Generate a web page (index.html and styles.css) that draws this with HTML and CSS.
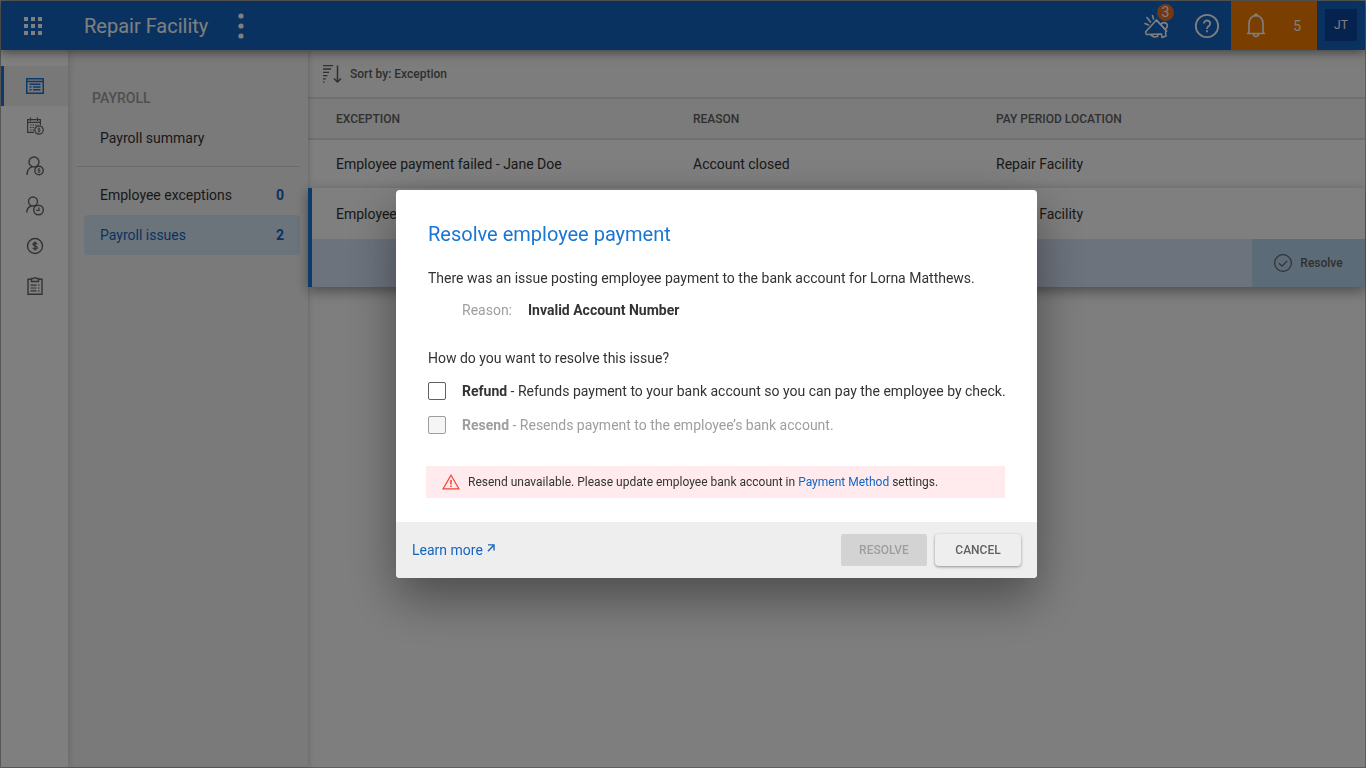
FILE: index.html
```html
<!DOCTYPE html>
<html lang="en">
<head>
    <meta charset="UTF-8">
    <meta name="viewport" content="width=device-width, initial-scale=1.0">
    <title>Repair Facility - Payroll issues</title>
    <link rel="stylesheet" href="styles.css">
</head>
<body>
    <div class="app">
        <header class="topbar">
            <button class="apps-btn" aria-label="Apps">
                <svg width="18" height="18" viewBox="0 0 18 18" fill="currentColor">
                    <path d="M0 0h4v4H0zM7 0h4v4H7zM14 0h4v4h-4zM0 7h4v4H0zM7 7h4v4H7zM14 7h4v4h-4zM0 14h4v4H0zM7 14h4v4H7zM14 14h4v4h-4z"/>
                </svg>
            </button>
            <h1>Repair Facility</h1>
            <button class="more-btn" aria-label="More">
                <svg width="6" height="26" viewBox="0 0 6 26" fill="currentColor">
                    <circle cx="3" cy="3" r="2.6"/><circle cx="3" cy="13" r="2.6"/><circle cx="3" cy="23" r="2.6"/>
                </svg>
            </button>
            <div class="topbar-right">
                <button class="top-btn news-btn" aria-label="News">
                    <svg width="26" height="28" viewBox="0 0 26 28" fill="none" stroke="currentColor" stroke-width="1.6" stroke-linejoin="round" stroke-linecap="round">
                        <path d="M12.5 8 1.5 20l1 2.5L17.500 22l.5 3.500 4-1.500-.5-4 1-1z"/>
                        <path d="M12.500 8 22.500 19M7 23l3 2 3.500-.5.5-2M17 13a3.200 3.200 0 1 1 3.500 4M1 11.500l3.500 1.500M3 5.500 6.500 10M8.500 3.500 9.500 7"/>
                    </svg>
                    <span class="news-count">3</span>
                </button>
                <button class="top-btn" aria-label="Help">
                    <svg width="26" height="26" viewBox="0 0 26 26" fill="none" stroke="currentColor" stroke-width="1.8">
                        <circle cx="13" cy="13" r="11.200"/>
                        <path d="M9.800 10.500a3.200 3 0 1 1 5 2.500c-1.300.9-1.800 1.400-1.800 3"/>
                        <path d="M13 17.300v2"/>
                    </svg>
                </button>
                <button class="alerts-btn" aria-label="Notifications">
                    <svg width="20" height="26" viewBox="0 0 20 26" fill="none" stroke="currentColor" stroke-width="1.600">
                        <path d="M1 20.500h18M3 20.500V10a7 7.500 0 0 1 14 0v10.500M7.500 20.500a2.500 3 0 0 0 5 0"/>
                        <circle cx="10" cy="2" r=".9" fill="currentColor"/>
                    </svg>
                    <span>5</span>
                </button>
                <button class="user-btn">JT</button>
            </div>
        </header>

        <div class="layout">
            <nav class="rail" aria-label="Main">
                <a href="#" class="rail-item active" aria-label="Payroll">
                    <svg width="18" height="18" viewBox="0 0 18 18" fill="none" stroke="currentColor" stroke-width="1.500">
                        <path d="M.75 1.750h16.500v14.500H.75zM1 4.500h16M3.500 7.300h11M3.500 10h2M7 10h7.500M3.500 12.800h2M7 12.800h7.500"/>
                    </svg>
                </a>
                <a href="#" class="rail-item" aria-label="Pay periods">
                    <svg width="18" height="18" viewBox="0 0 18 18" fill="none" stroke="currentColor" stroke-width="1.200">
                        <path d="M8 15.400H1.600V2.600h12.800V8M1.600 5.400h12.800M4.500.5V4M11.500.5V4"/>
                        <path d="M4 8h8M4 10.500h4.500M4 13h4" stroke-dasharray="1.500 1"/>
                        <circle cx="13" cy="13" r="4.200"/>
                        <path d="M14.300 11.700c-.6-.6-2.500-.5-2.500.4 0 1.200 2.500.6 2.500 1.800 0 1-1.900 1-2.600.3M13 10.600v4.800" stroke-width=".8"/>
                    </svg>
                </a>
                <a href="#" class="rail-item" aria-label="Employee pay">
                    <svg width="18" height="20" viewBox="0 0 18 20" fill="none" stroke="currentColor" stroke-width="1.400">
                        <circle cx="8" cy="6" r="5"/>
                        <path d="M1 19c0-4.500 2-7.200 5-8.200"/>
                        <circle cx="13" cy="14.500" r="4.200"/>
                        <path d="M14.300 13.200c-.6-.6-2.500-.5-2.500.4 0 1.200 2.500.6 2.500 1.800 0 1-1.900 1-2.600.3M13 12.100v4.800" stroke-width=".8"/>
                    </svg>
                </a>
                <a href="#" class="rail-item" aria-label="Employee time">
                    <svg width="18" height="20" viewBox="0 0 18 20" fill="none" stroke="currentColor" stroke-width="1.400">
                        <circle cx="7" cy="5.500" r="4.500"/>
                        <path d="M.8 16.500c0-3.500 1.800-5.700 4.500-6.500"/>
                        <circle cx="12.500" cy="14" r="4.800"/>
                        <path d="M13 11.300v3h-2.800" stroke-width="1.200"/>
                    </svg>
                </a>
                <a href="#" class="rail-item" aria-label="Payments">
                    <svg width="18" height="18" viewBox="0 0 18 18" fill="none" stroke="currentColor" stroke-width="1.400">
                        <circle cx="9" cy="9" r="7.500"/>
                        <path d="M11.200 7.200C10.500 5.500 7 5.700 7 7.300c0 2.100 4.200 1.200 4.200 3.400 0 1.700-3.600 1.900-4.400 0M9 4.500v9"/>
                    </svg>
                </a>
                <a href="#" class="rail-item" aria-label="Reports">
                    <svg width="18" height="18" viewBox="0 0 18 18" fill="none" stroke="currentColor" stroke-width="1.400">
                        <path d="M5 2.300H2v14.900h14V2.300h-3M5.500 4.500v-3H7.500L9 .5l1.500 1h2v3z"/>
                        <path d="M4.500 8.200h6M12 8.200h1.500M4.500 11h6M12 11h1.500M4.500 13.800h6M12 13.800h1.500" stroke-width="1.200"/>
                    </svg>
                </a>
            </nav>

            <aside class="panel">
                <h2>PAYROLL</h2>
                <a href="#" class="panel-item">Payroll summary</a>
                <hr>
                <a href="#" class="panel-item">Employee exceptions <b>0</b></a>
                <a href="#" class="panel-item active">Payroll issues <b>2</b></a>
            </aside>

            <main class="content">
                <div class="sortbar">
                    <button class="sort-btn">
                        <svg width="20" height="18" viewBox="0 0 20 18" fill="none" stroke="currentColor" stroke-width="1.300">
                            <path d="M1 .7h10M1 4h8M1 7.300h6M1 10.600h4.500M1 13.900h3M1 17.200h1.500"/>
                            <path d="M15.500.5V17M12 13.500l3.500 3.500 3.500-3.500" stroke-width="1.500"/>
                        </svg>
                        Sort by: Exception
                    </button>
                </div>
                <table class="issues">
                    <thead>
                        <tr>
                            <th class="col-exception">EXCEPTION</th>
                            <th class="col-reason">REASON</th>
                            <th>PAY PERIOD LOCATION</th>
                        </tr>
                    </thead>
                    <tbody>
                        <tr>
                            <td>Employee payment failed - Jane Doe</td>
                            <td>Account closed</td>
                            <td>Repair Facility</td>
                        </tr>
                    </tbody>
                    <tbody class="selected">
                        <tr>
                            <td>Employee payment failed</td>
                            <td>Invalid account</td>
                            <td>Repair Facility</td>
                        </tr>
                        <tr class="actions">
                            <td colspan="3">
                                <button class="row-resolve">
                                    <svg width="18" height="18" viewBox="0 0 18 18" fill="none" stroke="currentColor" stroke-width="1.200">
                                        <circle cx="9" cy="9" r="8.400"/>
                                        <path d="M5 9.200l3 2.900 5.300-5.300"/>
                                    </svg>
                                    Resolve
                                </button>
                            </td>
                        </tr>
                    </tbody>
                </table>
            </main>
        </div>
    </div>

    <div class="overlay">
        <form class="modal" role="dialog" aria-labelledby="modal-title">
            <div class="modal-body">
                <h2 id="modal-title">Resolve employee payment</h2>
                <p>There was an issue posting employee payment to the bank account for Lorna Matthews.</p>
                <p class="reason"><span>Reason:</span> <b>Invalid Account Number</b></p>
                <p class="question">How do you want to resolve this issue?</p>
                <label class="option">
                    <input type="checkbox" name="refund">
                    <span><b>Refund</b> - Refunds payment to your bank account so you can pay the employee by check.</span>
                </label>
                <label class="option disabled">
                    <input type="checkbox" name="resend" disabled>
                    <span><b>Resend</b> - Resends payment to the employee’s bank account.</span>
                </label>
                <div class="notice">
                    <svg width="18" height="16" viewBox="0 0 18 16" fill="none" stroke="currentColor" stroke-width="1.200">
                        <path d="M9 1.300 17 14.900H1z"/>
                        <path d="M9 6v4.500M9 11.500v1.500" stroke-width="1.500"/>
                    </svg>
                    <span>Resend unavailable. Please update employee bank account in <a href="#">Payment Method</a> settings.</span>
                </div>
            </div>
            <div class="modal-footer">
                <a href="#" class="learn-more">
                    Learn more
                    <svg width="8" height="8" viewBox="0 0 8 8" fill="none" stroke="currentColor" stroke-width="1.400">
                        <path d="M1 .9h6v5.600M7 .9.9 7.200"/>
                    </svg>
                </a>
                <button type="button" class="btn" disabled>RESOLVE</button>
                <button type="button" class="btn btn-cancel">CANCEL</button>
            </div>
        </form>
    </div>
</body>
</html>
```
FILE: styles.css
```css
* {
    box-sizing: border-box;
}
body {
    margin: 0;
    font-family: Roboto, "Liberation Sans", sans-serif;
    font-size: 14px;
    line-height: 20px;
    color: #333;
}
button {
    font-family: inherit;
    border: none;
    padding: 0;
    background: none;
    color: inherit;
    cursor: pointer;
}
a {
    color: #1565c0;
    text-decoration: none;
}
svg {
    display: block;
    flex: none;
}
h1, h2, p {
    margin: 0;
}

/* page */
.app {
    display: flex;
    flex-direction: column;
    min-height: 100vh;
    border: 1px solid #bdbdbd;
    background: #fcfcfc;
}
.topbar {
    position: relative;
    z-index: 3;
    display: flex;
    align-items: center;
    height: 49px;
    background: #1565c0;
    color: #fff;
    box-shadow: 0 2px 10px rgba(0, 0, 0, 0.5);
}
.apps-btn {
    margin-left: 23px;
}
.topbar h1 {
    margin: 0 30px 0 42px;
    font-size: 20px;
    font-weight: 400;
}
.topbar-right {
    display: flex;
    align-self: stretch;
    margin-left: auto;
}
.top-btn {
    position: relative;
    display: flex;
    align-items: center;
    justify-content: center;
    width: 50px;
    border-left: 1px solid #0f69b8;
}
.news-count {
    position: absolute;
    top: 3px;
    right: 7px;
    width: 17px;
    height: 17px;
    border-radius: 50%;
    background: #e8702a;
    font-size: 14px;
    line-height: 17px;
    text-align: center;
}
.alerts-btn {
    display: flex;
    align-items: center;
    justify-content: space-between;
    width: 86px;
    padding: 0 16px 0 15px;
    background: #f57c00;
    font-size: 14px;
}
.user-btn {
    width: 32px;
    height: 32px;
    margin: 8px;
    background: #0d47a1;
    font-size: 12px;
}
.layout {
    display: flex;
    flex: 1;
}

/* left rail */
.rail {
    position: relative;
    z-index: 2;
    flex: none;
    width: 67px;
    padding-top: 16px;
    background: #fff;
    box-shadow: 0 0 8px rgba(0, 0, 0, 0.2);
}
.rail-item {
    display: flex;
    align-items: center;
    justify-content: center;
    height: 40px;
    color: #666;
}
.rail-item.active {
    border-left: 3px solid #1976d2;
    padding-right: 3px;
    background: #f0f0f0;
    color: #1976d2;
}

/* payroll menu */
.panel {
    position: relative;
    z-index: 1;
    flex: none;
    width: 240px;
    padding: 38px 8px 0;
    background: #f5f5f5;
    box-shadow: 0 0 6px rgba(0, 0, 0, 0.25);
}
.panel h2 {
    margin: 0 0 10px 16px;
    font-size: 14px;
    font-weight: 500;
    color: #9e9e9e;
}
.panel hr {
    margin: 8px 0;
    border: none;
    border-top: 1px solid #d8d8d8;
}
.panel-item {
    display: flex;
    justify-content: space-between;
    margin-left: 8px;
    padding: 10px 16px;
    border-radius: 4px;
    color: #333;
}
.panel-item b {
    color: #1565c0;
}
.panel-item.active {
    background: #d9e9f7;
    color: #1565c0;
}

/* issues table */
.content {
    flex: 1;
}
.sortbar {
    display: flex;
    height: 49px;
    padding: 0 14px;
    background: #fafafa;
    border-bottom: 2px solid #e0e0e0;
}
.sort-btn {
    display: flex;
    align-items: center;
    gap: 8px;
    font-size: 12px;
    font-weight: 500;
    color: #616161;
}
.issues {
    width: 100%;
    border-collapse: separate;
    border-spacing: 0;
    table-layout: fixed;
}
.issues th {
    height: 41px;
    padding: 0 0 0 28px;
    background: #f7f7f7;
    border-bottom: 2px solid #e0e0e0;
    font-size: 12px;
    font-weight: 500;
    text-align: left;
    color: #616161;
}
.issues td {
    height: 48px;
    padding: 0 0 0 28px;
    background: #fff;
}
.col-exception {
    width: 357px;
}
.col-reason {
    width: 303px;
}
.selected {
    position: relative;
    z-index: 2;
    box-shadow: 0 4px 12px rgba(0, 0, 0, 0.4);
}
.selected td {
    height: 51px;
}
.selected td:first-child {
    padding-left: 24px;
    border-left: 4px solid #1976d2;
}
.selected .actions td {
    height: 48px;
    padding: 0;
    background: #dae6fb;
}
.row-resolve {
    display: flex;
    align-items: center;
    justify-content: center;
    gap: 8px;
    width: 113px;
    height: 48px;
    margin-left: auto;
    background: #b9d6f0;
    font-size: 12px;
    font-weight: 500;
    color: #616161;
}

/* dialog, centered over the area right of the rail */
.overlay {
    position: fixed;
    inset: 0;
    z-index: 10;
    display: flex;
    align-items: center;
    justify-content: center;
    padding-left: 67px;
    background: rgba(0, 0, 0, 0.5);
}
.modal {
    width: 641px;
    border-radius: 4px;
    overflow: hidden;
    background: #fff;
    box-shadow: 0 20px 50px rgba(0, 0, 0, 0.4);
}
.modal-body {
    padding: 32px 32px 24px;
}
.modal h2 {
    margin-bottom: 22px;
    font-size: 20px;
    font-weight: 400;
    line-height: 24px;
    color: #1976d2;
}
.reason {
    display: flex;
    gap: 16px;
    margin: 12px 0 28px 34px;
}
.reason span {
    color: #9e9e9e;
}
.question {
    margin-bottom: 6px;
}
.option {
    display: flex;
    align-items: center;
    gap: 16px;
    height: 34px;
    white-space: nowrap;
}
.option input {
    appearance: none;
    flex: none;
    width: 18px;
    height: 18px;
    margin: 0;
    border: 1px solid #616161;
    border-radius: 2px;
    background: #fff;
}
.option input:checked {
    background: #1976d2;
}
.option.disabled {
    color: #9e9e9e;
}
.option.disabled input {
    border-color: #9e9e9e;
    background: #f5f5f5;
}
.notice {
    display: flex;
    align-items: center;
    gap: 8px;
    height: 32px;
    margin: 24px 0 0 -2px;
    padding: 0 16px;
    background: #ffebee;
    font-size: 12px;
}
.notice svg {
    color: #f44336;
}
.modal-footer {
    display: flex;
    align-items: center;
    gap: 8px;
    height: 56px;
    padding: 0 16px;
    background: #eee;
}
.learn-more {
    display: flex;
    gap: 4px;
    margin-right: auto;
}
.learn-more svg {
    margin-top: 4px;
}
.btn {
    width: 86px;
    height: 32px;
    border-radius: 2px;
    background: #d3d3d3;
    font-size: 12px;
    font-weight: 500;
    color: #9e9e9e;
}
.btn-cancel {
    border-radius: 4px;
    background: #eee;
    color: #616161;
    box-shadow: 0 1px 3px rgba(0, 0, 0, 0.4);
}
```
